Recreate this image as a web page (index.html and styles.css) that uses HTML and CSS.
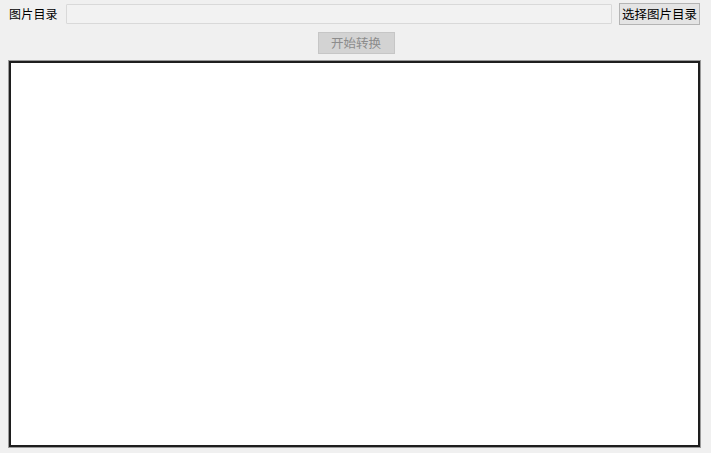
FILE: index.html
```html
<!DOCTYPE html>
<html lang="zh-CN">
<head>
<meta charset="utf-8">
<title>图片转换</title>
<link rel="stylesheet" href="styles.css">
</head>
<body>
<div class="app">
  <div class="top-row">
    <span class="label">图片目录</span>
    <div class="path-field"></div>
    <button class="btn choose">选择图片目录</button>
  </div>
  <div class="action-row">
    <button class="btn start" disabled>开始转换</button>
  </div>
  <div class="output"></div>
</div>
</body>
</html>
```

FILE: styles.css
```css
html, body {
  margin: 0;
  padding: 0;
  background: #f0f0f0;
  width: 711px;
  height: 453px;
  overflow: hidden;
}
.app {
  box-sizing: border-box;
  width: 711px;
  height: 453px;
  padding: 3px 11px 6px 9px;
  display: flex;
  flex-direction: column;
  font-family: "Noto Sans CJK SC", "Noto Sans", sans-serif;
  font-size: 12px;
  color: #000;
}
.top-row {
  display: flex;
  align-items: center;
  height: 22px;
}
.label {
  width: 50px;
  line-height: 14px;
  letter-spacing: 0.2px;
  margin-right: 7px;
}
.path-field {
  flex: 1;
  height: 20px;
  box-sizing: border-box;
  border: 1px solid #d9d9d9;
  background: #f2f2f2;
  border-radius: 1px;
  margin-top: -1px;
  margin-right: 7px;
}
.btn {
  font-family: inherit;
  font-size: 12.5px;
  padding: 0;
  box-sizing: border-box;
  line-height: 18px;
}
.choose {
  width: 81px;
  height: 22px;
  border: 1px solid #b4b4b4;
  background: #e4e4e4;
  color: #000;
}
.action-row {
  display: flex;
  justify-content: center;
  padding-top: 7px;
  padding-left: 3px;
}
.start {
  width: 77px;
  height: 22px;
  border: 1px solid #c6c6c6;
  background: #d3d3d3;
  color: #8c8c8c;
}
.output {
  margin-top: 7px;
  flex: 1;
  box-sizing: border-box;
  border: 2px solid #1e1e1e;
  box-shadow: 0 0 0 1px #9a9a9a;
  background: #ffffff;
}
```
